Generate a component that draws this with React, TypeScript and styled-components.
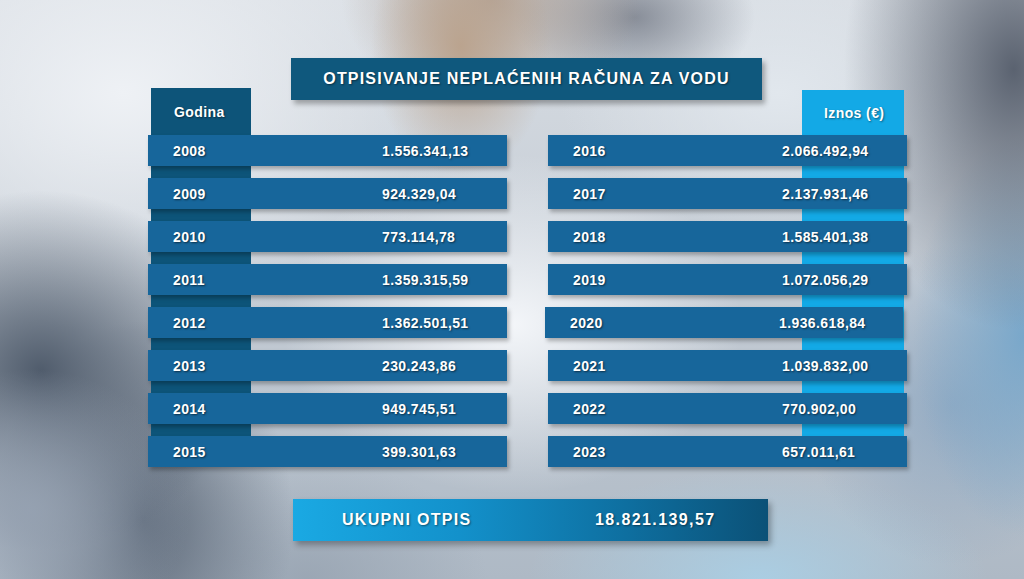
import styled, { createGlobalStyle } from "styled-components";

const LEFT_ROWS = [
  { year: "2008", amount: "1.556.341,13" },
  { year: "2009", amount: "924.329,04" },
  { year: "2010", amount: "773.114,78" },
  { year: "2011", amount: "1.359.315,59" },
  { year: "2012", amount: "1.362.501,51" },
  { year: "2013", amount: "230.243,86" },
  { year: "2014", amount: "949.745,51" },
  { year: "2015", amount: "399.301,63" },
];

const RIGHT_ROWS = [
  { year: "2016", amount: "2.066.492,94" },
  { year: "2017", amount: "2.137.931,46" },
  { year: "2018", amount: "1.585.401,38" },
  { year: "2019", amount: "1.072.056,29" },
  { year: "2020", amount: "1.936.618,84", shifted: true },
  { year: "2021", amount: "1.039.832,00" },
  { year: "2022", amount: "770.902,00" },
  { year: "2023", amount: "657.011,61" },
];

function App() {
  return (
    <>
      <GlobalStyle />
      <Stage>
        <TitleBar>OTPISIVANJE NEPLAĆENIH RAČUNA ZA VODU</TitleBar>

        <Columns>
          <Column $tab="#0d5479" $tabLeft={3} $tabWidth={100}>
            <HeaderCell $height={47} $indent={26}>
              Godina
            </HeaderCell>
            {LEFT_ROWS.map(({ year, amount }) => (
              <Row key={year}>
                <Year>{year}</Year>
                <Amount>{amount}</Amount>
              </Row>
            ))}
          </Column>

          <Column $tab="#13a9e6" $tabLeft={254} $tabWidth={102} $offset={2}>
            <HeaderCell $height={45} $indent={276}>
              Iznos (€)
            </HeaderCell>
            {RIGHT_ROWS.map(({ year, amount, shifted }) => (
              <Row key={year} $shifted={shifted}>
                <Year>{year}</Year>
                <Amount>{amount}</Amount>
              </Row>
            ))}
          </Column>
        </Columns>

        <TotalBar>
          <TotalLabel>UKUPNI OTPIS</TotalLabel>
          <TotalValue>18.821.139,57</TotalValue>
        </TotalBar>
      </Stage>
    </>
  );
}

export default App;

const GlobalStyle = createGlobalStyle`
  html, body {
    margin: 0;
    padding: 0;
    background: #c9d0d8;
  }

  #root {
    width: 1024px;
    height: 579px;
  }
`;

// blurred photo behind the table, approximated with soft blobs
const Stage = styled.div`
  width: 1024px;
  height: 579px;
  box-sizing: border-box;
  overflow: hidden;
  display: flex;
  flex-direction: column;
  align-items: flex-start;
  padding: 58px 0 0 148px;
  font-family: "Liberation Sans", Arial, sans-serif;
  font-weight: 700;
  color: #ffffff;
  background:
    radial-gradient(ellipse 230px 170px at 50% 56%, rgba(246, 248, 251, 0.95), transparent),
    radial-gradient(ellipse 90px 130px at 45% 8%, rgba(186, 162, 140, 0.95), transparent),
    radial-gradient(ellipse 150px 110px at 48% 0%, rgba(170, 152, 138, 0.8), transparent),
    radial-gradient(ellipse 120px 80px at 62% 3%, rgba(116, 122, 134, 0.8), transparent),
    radial-gradient(ellipse 170px 260px at 99% 12%, rgba(84, 92, 106, 0.95), transparent),
    radial-gradient(ellipse 110px 200px at 100% 58%, rgba(118, 166, 202, 0.95), transparent),
    radial-gradient(ellipse 150px 160px at 93% 70%, rgba(130, 160, 190, 0.7), transparent),
    radial-gradient(ellipse 230px 110px at 74% 100%, rgba(170, 208, 230, 0.9), transparent),
    radial-gradient(ellipse 160px 140px at 3% 88%, rgba(150, 162, 178, 0.9), transparent),
    radial-gradient(ellipse 200px 180px at 4% 64%, rgba(80, 92, 108, 1), transparent),
    radial-gradient(ellipse 150px 200px at 14% 90%, rgba(88, 100, 116, 0.95), transparent),
    radial-gradient(ellipse 180px 120px at 30% 100%, rgba(150, 162, 176, 0.8), transparent),
    radial-gradient(ellipse 340px 240px at 12% 16%, rgba(238, 241, 245, 1), transparent),
    radial-gradient(ellipse 220px 140px at 76% 16%, rgba(226, 232, 238, 0.95), transparent),
    linear-gradient(180deg, #d8dde3 0%, #c2cad3 55%, #aeb9c5 100%);
`;

const TitleBar = styled.div`
  margin-left: 143px;
  width: 471px;
  height: 42px;
  display: flex;
  align-items: center;
  justify-content: center;
  background: #0f587d;
  box-shadow: 3px 4px 5px rgba(0, 0, 0, 0.3);
  font-size: 16px;
  letter-spacing: 1.2px;
  text-shadow: 1px 1px 2px rgba(0, 0, 0, 0.45);
  position: relative;
  z-index: 1;
`;

const Columns = styled.div`
  display: flex;
  gap: 41px;
  margin-top: -12px;
`;

const Column = styled.div<{
  $tab: string;
  $tabLeft: number;
  $tabWidth: number;
  $offset?: number;
}>`
  width: 359px;
  display: flex;
  flex-direction: column;
  gap: 12px;
  margin-top: ${(p) => p.$offset ?? 0}px;
  background: linear-gradient(${(p) => p.$tab}, ${(p) => p.$tab}) no-repeat;
  background-position: ${(p) => p.$tabLeft}px 0;
  background-size: ${(p) => p.$tabWidth}px calc(100% - 16px);
`;

const HeaderCell = styled.div<{ $height: number; $indent: number }>`
  height: ${(p) => p.$height}px;
  margin-bottom: -12px;
  display: flex;
  align-items: center;
  padding-left: ${(p) => p.$indent}px;
  font-size: 14px;
  letter-spacing: 0.4px;
  text-shadow: 1px 1px 2px rgba(0, 0, 0, 0.45);
`;

const Row = styled.div<{ $shifted?: boolean }>`
  height: 31px;
  display: grid;
  grid-template-columns: 234px 1fr;
  align-items: center;
  padding-left: 25px;
  margin-left: ${(p) => (p.$shifted ? -3 : 0)}px;
  margin-right: ${(p) => (p.$shifted ? 4 : 0)}px;
  background: #17669b;
  box-shadow: 2px 3px 4px rgba(0, 0, 0, 0.28);
  font-size: 14px;
  letter-spacing: 0.4px;
  text-shadow: 1px 1px 2px rgba(0, 0, 0, 0.55);
`;

const Year = styled.span`
  white-space: nowrap;
`;

const Amount = styled.span`
  white-space: nowrap;
  margin-left: -25px;
`;

const TotalBar = styled.div`
  margin-top: 32px;
  margin-left: 145px;
  width: 475px;
  height: 42px;
  display: grid;
  grid-template-columns: 253px 1fr;
  align-items: center;
  padding-left: 49px;
  box-sizing: border-box;
  background: linear-gradient(90deg, #1aa9e3 0%, #1391cb 35%, #0e6fa0 70%, #0b5177 100%);
  box-shadow: 3px 4px 6px rgba(0, 0, 0, 0.3);
  font-size: 16px;
  text-shadow: 1px 1px 2px rgba(0, 0, 0, 0.45);
`;

const TotalLabel = styled.span`
  letter-spacing: 1.3px;
`;

const TotalValue = styled.span`
  letter-spacing: 1.4px;
`;
